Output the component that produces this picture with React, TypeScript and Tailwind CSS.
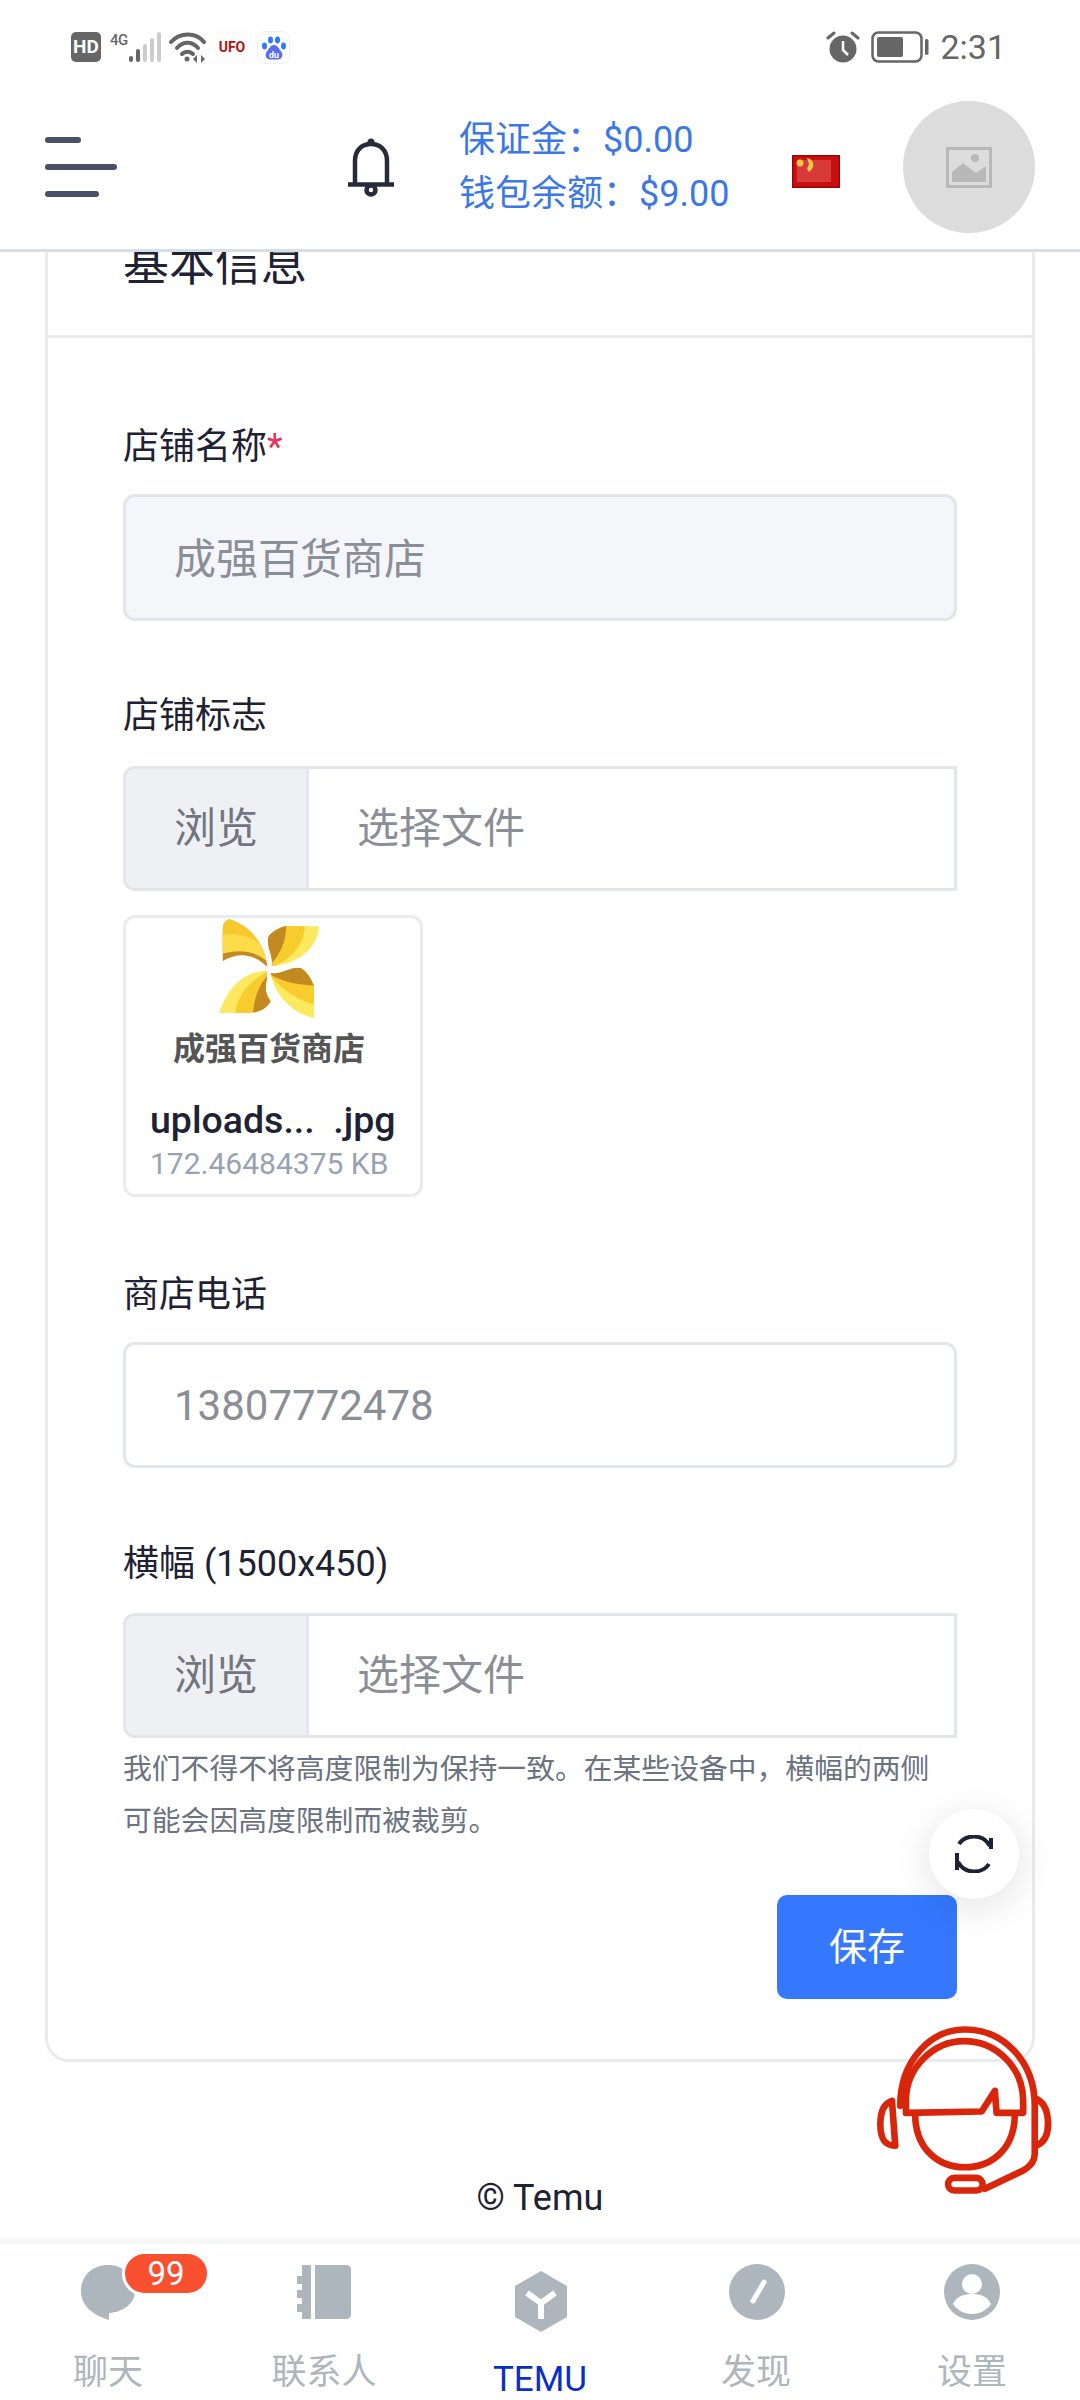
import React from "react";

function Logo() {
  return (
    <svg width="102" height="100" viewBox="355 60 305 300" className="block">
      <defs>
        <clipPath id="tl"><path d="M500 208C492 135 445 82 385 64Q365 68 365 100L365 190C420 155 470 175 500 208Z" /></clipPath>
        <clipPath id="tr"><path d="M512 205C520 170 490 140 505 112Q525 92 555 84L655 85C650 140 610 195 512 205Z" /></clipPath>
        <clipPath id="br"><path d="M510 225C540 232 570 205 600 210Q625 225 640 265L640 360C590 352 520 300 510 225Z" /></clipPath>
        <clipPath id="bl"><path d="M497 218C440 220 385 255 355 345L440 345Q490 345 510 310C480 270 505 250 497 218Z" /></clipPath>
      </defs>
      <g clipPath="url(#tl)">
        <rect x="355" y="60" width="160" height="160" fill="#c48a22" />
        <path d="M355 60H510V200C470 160 420 150 355 170Z" fill="#fddc4a" />
        <path d="M355 60H510V170C470 120 420 100 355 112Z" fill="#f7c92c" />
      </g>
      <g clipPath="url(#tr)">
        <rect x="500" y="80" width="160" height="130" fill="#fde95f" />
        <path d="M500 80H612C612 140 570 190 500 210Z" fill="#f8cc2c" />
        <path d="M500 80H556C556 130 540 170 500 210Z" fill="#c48a22" />
      </g>
      <g clipPath="url(#br)">
        <rect x="500" y="200" width="150" height="165" fill="#fde95f" />
        <path d="M500 200H650V322C590 310 540 270 500 225Z" fill="#f8cc2c" />
        <path d="M500 200H650V263C590 262 540 250 500 225Z" fill="#c48a22" />
      </g>
      <g clipPath="url(#bl)">
        <rect x="350" y="210" width="165" height="140" fill="#fde95f" />
        <path d="M515 215C450 240 410 290 402 350H515Z" fill="#f8cc2c" />
        <path d="M515 215C480 250 460 290 456 350H515Z" fill="#c48a22" />
      </g>
    </svg>
  );
}

function Headset() {
  return (
    <svg width="176" height="172" viewBox="410 730 530 515" fill="none" stroke="#d9260a" strokeWidth="20" strokeLinejoin="round" strokeLinecap="round">
      <path d="M480 975C480 840 570 745 675 745C790 745 885 840 885 975L885 1120Q885 1150 850 1170L735 1225" />
      <path d="M497 996V960C497 860 580 780 672 780C770 780 850 860 850 960V996H770L765 930L725 992Z" />
      <path d="M525 1000C525 1100 590 1160 675 1160C760 1160 825 1100 825 1000" />
      <path d="M455 960C425 970 420 1000 420 1030C420 1070 430 1095 465 1095Z" />
      <path d="M892 955C920 970 925 1000 925 1030C925 1060 915 1085 890 1095" />
      <rect x="624" y="1192" width="104" height="38" rx="19" />
    </svg>
  );
}

function FileRow() {
  return (
    <div className="flex h-[125px] border-[3px] border-[#e2e5ec] rounded-l-[12px] overflow-hidden">
      <div className="w-[183px] shrink-0 bg-[#eff0f3] border-r-[3px] border-[#e2e5ec] flex items-center pl-[48px] text-[42px] leading-[56px] text-[#70757f]">浏览</div>
      <div className="flex-1 flex items-center pl-[48px] text-[42px] leading-[56px] text-[#8a8e96]">选择文件</div>
    </div>
  );
}

function Tab({ label, active, children }: { label: string; active?: boolean; children: React.ReactNode }) {
  return (
    <div className={active ? "flex flex-col items-center pt-[27px]" : "flex flex-col items-center pt-[20px]"}>
      <div className={active ? "h-[61px] flex items-center" : "h-[56px] flex items-center"}>{children}</div>
      <div className={active ? "mt-[30px] h-[36px] leading-[36px] text-[35px] text-[#0a2fc4]" : "mt-[33px] h-[40px] leading-[40px] text-[35px] text-[#aeb6bd]"}>{label}</div>
    </div>
  );
}

export default function App() {
  return (
    <div className="relative w-[1080px] h-[2400px] overflow-hidden bg-white flex flex-col font-[Roboto,'Noto_Sans_CJK_SC',sans-serif]">
      {/* status bar */}
      <div className="h-[85px] shrink-0 flex items-start justify-between pt-[31px] pl-[71px] pr-[74px]">
        <div className="flex items-start">
          <div className="mt-[1px] w-[30px] h-[30px] rounded-[5px] bg-[#666] text-white text-[19px] font-bold leading-[30px] text-center">HD</div>
          <div className="ml-[9px] mt-[-1px] w-[20px] h-[20px] text-[15px] leading-[20px] font-medium text-[#666] tracking-[-0.5px]">4G</div>
          <svg width="32" height="32" viewBox="18 0 32 32" className="-ml-[1px]">
            <rect x="18" y="25" width="4" height="6" rx="2" fill="#666" />
            <rect x="25" y="18" width="4" height="13" rx="2" fill="#666" />
            <rect x="32" y="13" width="4" height="18" rx="2" fill="#ccc" />
            <rect x="39" y="7" width="4" height="24" rx="2" fill="#ccc" />
            <rect x="46" y="1" width="4" height="30" rx="2" fill="#ccc" />
          </svg>
          <svg width="38" height="32" viewBox="0 0 38 32" className="ml-[8px]" fill="none" stroke="#666" strokeWidth="4" strokeLinecap="round">
            <path d="M2 11C11 1 27 1 35 11" />
            <path d="M8 17C14 10 23 10 29 17" />
            <path d="M13 23C16 20 21 20 24 23" />
            <circle cx="18" cy="28" r="2.5" fill="#666" stroke="none" />
            <path d="M28 24L24 28L28 32ZM32 24L36 28L32 32Z" fill="#666" stroke="none" />
          </svg>
          <div className="ml-[9px] w-[32px] h-[32px] bg-[#fdfcfb] flex items-center justify-center text-[14px] font-bold text-[#b01212]">UFO</div>
          <div className="ml-[9px] w-[33px] h-[33px] rounded-[8px] border border-[#eef0f5] flex items-center justify-center">
            <svg width="26" height="26" viewBox="0 0 26 26">
              <ellipse cx="3.5" cy="11" rx="2.5" ry="3.4" fill="#2f7bf0" />
              <ellipse cx="9.5" cy="5" rx="2.5" ry="3.4" fill="#2f7bf0" />
              <ellipse cx="16.5" cy="5" rx="2.5" ry="3.4" fill="#2f7bf0" />
              <ellipse cx="22.5" cy="11" rx="2.5" ry="3.4" fill="#2f7bf0" />
              <path d="M13 10C9 10 8 14 5.500 17C3.500 20 5 25 10 24.500H16C21 25 22.500 20 20.500 17C18 14 17 10 13 10Z" fill="#5a6cf0" />
              <text x="13" y="23" fontSize="9" fontWeight="700" textAnchor="middle" fill="#fff" fontFamily="Roboto">du</text>
            </svg>
          </div>
        </div>
        <div className="flex items-start">
          <svg width="34" height="32" viewBox="0 0 34 32">
            <circle cx="17" cy="18" r="13.500" fill="#666" />
            <path d="M17 10V19L22 24" stroke="#fff" strokeWidth="2.500" fill="none" />
            <path d="M2 7L8 2M32 7L26 2" stroke="#666" strokeWidth="3" strokeLinecap="round" />
          </svg>
          <svg width="60" height="33" viewBox="0 0 60 33" className="ml-[11px]">
            <rect x="1.500" y="1.500" width="49" height="29" rx="6" fill="none" stroke="#666" strokeWidth="2.500" />
            <rect x="6" y="6" width="26" height="20" rx="2" fill="#666" />
            <rect x="54" y="8" width="3.500" height="16" rx="1.700" fill="#666" />
          </svg>
          <div className="ml-[9px] text-[34px] leading-[33px] text-[#666]">2:31</div>
        </div>
      </div>

      {/* header */}
      <div className="h-[167px] -mb-[2px] shrink-0 relative z-10 bg-white border-b-[3px] border-[#d5dfe6] flex items-center">
        <div className="ml-[45px] w-[72px] flex flex-col gap-[21px] -mt-[1px]">
          <div className="w-[36px] h-[6px] rounded-full bg-[#4a5068]" />
          <div className="w-[72px] h-[6px] rounded-full bg-[#4a5068]" />
          <div className="w-[54px] h-[6px] rounded-full bg-[#4a5068]" />
        </div>
        <svg width="46" height="60" viewBox="0 0 46 60" className="ml-[231px]" fill="none" stroke="#252b3b" strokeWidth="4.500">
          <path d="M7 47V24C7 13 14 7 23 7C32 7 39 13 39 24V47" />
          <path d="M0 47.500H46" />
          <circle cx="23" cy="5" r="3.500" fill="#252b3b" stroke="none" />
          <circle cx="23" cy="53" r="4.500" />
        </svg>
        <div className="ml-[65px] w-[333px] text-[36px] leading-[54px] text-[#3b78e7] whitespace-nowrap">
          <div>保证金：$0.00</div>
          <div>钱包余额：$9.00</div>
        </div>
        <svg width="48" height="33" viewBox="0 0 48 33" className="mt-[9px]">
          <defs>
            <filter id="b"><feGaussianBlur stdDeviation="0.700" /></filter>
          </defs>
          <rect width="48" height="33" fill="#a00404" />
          <rect x="1.500" y="1.500" width="45" height="30" fill="#c81010" />
          <rect x="5" y="5" width="34" height="22" fill="#d83a3a" />
          <g filter="url(#b)" fill="#f2c84a">
            <circle cx="8" cy="8" r="3.500" />
            <path d="M15 3A7 7 0 0 1 20 14L17 17L15 14L17 9Z" />
          </g>
        </svg>
        <div className="ml-[63px] w-[132px] h-[132px] rounded-full bg-[#dcdcdc] flex items-center justify-center">
          <svg width="46" height="41" viewBox="0 0 46 41">
            <rect x="1.500" y="1.500" width="43" height="38" fill="none" stroke="#b8b8b8" strokeWidth="3" />
            <circle cx="29" cy="11" r="4" fill="#b8b8b8" />
            <path d="M6 35V25L17 16L30 26L40 19V35Z" fill="#b8b8b8" />
          </svg>
        </div>
      </div>

      {/* content */}
      <div className="flex-1 min-h-0 overflow-hidden">
        <div className="-mt-[60px] mx-[45px] border-[3px] border-[#e9ebf1] rounded-[24px]">
          <div className="pt-[44px] pb-[44px] pl-[75px] text-[46px] leading-[54px] text-[#1e2233] border-b-[3px] border-[#e9ebf1]">基本信息</div>
          <div className="pl-[75px] pr-[75px] pt-[82px] pb-[60px]">
            <div className="text-[36px] leading-[54px] text-[#1e2233]">店铺名称<span className="text-[#e8315b]">*</span></div>
            <div className="mt-[20px] h-[127px] rounded-[12px] border-[3px] border-[#e2e5ec] bg-[#f5f6fa] flex items-center pl-[48px] pt-[3px] text-[42px] text-[#8a8e96]">成强百货商店</div>

            <div className="mt-[68px] text-[36px] leading-[54px] text-[#1e2233]">店铺标志</div>
            <div className="mt-[23px]"><FileRow /></div>
            <div className="mt-[24px] w-[300px] h-[282px] rounded-[12px] border-[3px] border-[#e9ebf1] flex flex-col items-center">
              <div className="mr-[6px]"><Logo /></div>
              <div className="mt-[11px] mr-[8px] text-[32px] leading-[40px] font-bold text-[#555]">成强百货商店</div>
              <div className="mt-[29px] w-full pl-[24px] text-[37.5px] leading-[44px] font-medium text-[#1e2233] whitespace-pre">uploads...  .jpg</div>
              <div className="mt-[4px] w-full pl-[24px] text-[30px] leading-[36px] text-[#98a2b3]">172.46484375 KB</div>
            </div>

            <div className="mt-[71px] text-[36px] leading-[54px] text-[#1e2233]">商店电话</div>
            <div className="mt-[20px] h-[126px] rounded-[12px] border-[3px] border-[#e2e5ec] flex items-center pl-[48px] text-[42px] text-[#8a8e96]">13807772478</div>

            <div className="mt-[69px] text-[36px] leading-[54px] text-[#1e2233]">横幅 (1500x450)</div>
            <div className="mt-[22px]"><FileRow /></div>
            <div className="mt-[5px] text-[28.8px] leading-[52px] text-[#6b7280]">我们不得不将高度限制为保持一致。在某些设备中，横幅的两侧可能会因高度限制而被裁剪。</div>
            <div className="mt-[48px] flex justify-end">
              <div className="w-[180px] h-[104px] rounded-[10px] bg-[#3578fe] text-white text-[38px] flex items-center justify-center">保存</div>
            </div>
          </div>
        </div>
        <div className="mt-[109px] text-center text-[36px] leading-[54px] text-[#1e2233]">© Temu</div>
      </div>

      {/* tab bar */}
      <div className="h-[162px] shrink-0 border-t-[6px] border-[#f5f7f7] grid grid-cols-5 bg-white">
        <Tab label="聊天">
          <div className="relative w-[56px] h-[56px]">
            <svg width="56" height="56" viewBox="0 0 56 56">
              <path d="M28 1C12 1 1 12 1 27C1 40 10 50 29 56V49C44 48 55 39 55 27C55 12 44 1 28 1Z" fill="#aeb6bd" />
            </svg>
            <div className="absolute left-[42px] -top-[13px] w-[88px] h-[45px] rounded-full bg-[#f9502f] border-[3px] border-white text-white text-[33px] leading-[39px] text-center box-border">99</div>
          </div>
        </Tab>
        <Tab label="联系人">
          <svg width="56" height="56" viewBox="0 0 56 56" fill="#aeb6bd">
            <path d="M6 1H15V55H6ZM19 1H50Q55 1 55 6V50Q55 55 50 55H19Z" />
            <path d="M1 12H6V20H1ZM1 26H6V34H1ZM1 40H6V48H1Z" />
          </svg>
        </Tab>
        <Tab label="TEMU" active>
          <svg width="52" height="61" viewBox="0 0 52 61" className="ml-[2px]">
            <path d="M26 0L52 15V46L26 61L0 46V15Z" fill="#aeb6bd" />
            <path d="M12 22L26 32L40 22M26 32V48" fill="none" stroke="#fff" strokeWidth="6" />
          </svg>
        </Tab>
        <Tab label="发现">
          <svg width="56" height="56" viewBox="0 0 56 56" className="ml-[2px]">
            <circle cx="28" cy="28" r="28" fill="#aeb6bd" />
            <path d="M35 18L24 37" stroke="#fff" strokeWidth="5" strokeLinecap="round" />
          </svg>
        </Tab>
        <Tab label="设置">
          <svg width="56" height="56" viewBox="0 0 56 56">
            <circle cx="28" cy="28" r="28" fill="#aeb6bd" />
            <circle cx="28" cy="20" r="10" fill="#fff" />
            <path d="M9 40C13 32 20 30 28 30C36 30 43 32 47 40C42 47 35 50 28 50C21 50 14 47 9 40Z" fill="#fff" />
          </svg>
        </Tab>
      </div>

      {/* floating */}
      <div className="absolute left-[929px] top-[1809px] w-[90px] h-[90px] rounded-full bg-white shadow-[0_8px_40px_rgba(0,0,0,0.12)] flex items-center justify-center">
        <svg width="40" height="38" viewBox="0 0 40 38" fill="none" stroke="#1e2233" strokeWidth="4">
          <path d="M5 9C9 3 14 1.500 20 1.500C27 1.500 32 4 36 11" />
          <path d="M35 29C31 35 26 36.500 20 36.500C13 36.500 8 34 4 27" />
          <path d="M37 3V14" />
          <path d="M3 18V35" />
        </svg>
      </div>
      <div className="absolute left-[877px] top-[2024px]">
        <Headset />
      </div>
    </div>
  );
}
